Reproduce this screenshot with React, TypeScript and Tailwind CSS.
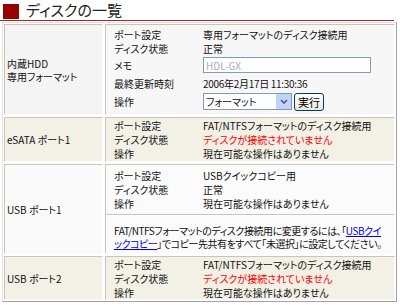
import React from "react";

const font = {
  fontFamily: '"Noto Sans CJK JP", "Noto Sans", sans-serif',
};

function Label({ children }: { children: React.ReactNode }) {
  return <div className="w-[97px] shrink-0 pl-[8px]">{children}</div>;
}

function InfoRows({
  rows,
}: {
  rows: { label: string; value: React.ReactNode; red?: boolean }[];
}) {
  return (
    <div className="flex flex-col">
      {rows.map((r) => (
        <div key={r.label} className="flex h-[14px] items-center">
          <Label>{r.label}</Label>
          <div className={r.red ? "text-[#ff0000]" : "text-[#111]"}>
            {r.value}
          </div>
        </div>
      ))}
    </div>
  );
}

function Row({
  title,
  bg,
  leftBg,
  children,
  h,
}: {
  title: React.ReactNode;
  bg: string;
  leftBg: string;
  children: React.ReactNode;
  h: string;
}) {
  return (
    <div className={`flex gap-[2px] ${h}`}>
      <div
        className={`flex w-[99px] shrink-0 items-center border border-t-[#c9c5b9] border-l-[#c9c5b9] border-b-[#fdfdfb] border-r-[#fdfdfb] pl-[2px] ${leftBg}`}
      >
        <div className="leading-[13px]">{title}</div>
      </div>
      <div
        className={`flex flex-1 flex-col border border-t-[#c9c5b9] border-l-[#c9c5b9] border-b-[#fdfdfb] border-r-[#fdfdfb] ${bg}`}
      >
        {children}
      </div>
    </div>
  );
}

export default function App() {
  return (
    <div
      className="h-[305px] w-[400px] overflow-hidden bg-white text-[10px] text-[#111]"
      style={{ ...font, fontFeatureSettings: '"palt"' }}
    >
      {/* 見出し */}
      <div className="flex h-[22px] items-start">
        <div className="flex w-[394px] items-center border-b border-[#b22222] pb-[1px]">
          <div className="ml-[3px] mt-[3px] h-[15px] w-[16px] bg-[#990000]" />
          <div className="ml-[7px] mt-[1px] text-[15px] leading-[18px] text-[#222]">
            ディスクの一覧
          </div>
        </div>
      </div>

      {/* 一覧 */}
      <div className="ml-[2px] flex w-[395px] flex-col gap-[2px] border border-t-[#e6e3da] border-l-[#e6e3da] border-b-[#a4a4a4] border-r-[#a4a4a4] p-[1px]">
        {/* 内蔵HDD */}
        <Row
          h="h-[91px]"
          leftBg="bg-[#f4f4f4]"
          bg="bg-[#f7f7f7]"
          title={
            <>
              <div>内蔵HDD</div>
              <div>専用フォーマット</div>
            </>
          }
        >
          <div className="flex flex-col pt-[2px]">
            <div className="flex h-[14px] items-center">
              <Label>ポート設定</Label>
              <div>専用フォーマットのディスク接続用</div>
            </div>
            <div className="flex h-[14px] items-center">
              <Label>ディスク状態</Label>
              <div>正常</div>
            </div>
            <div className="flex h-[20px] items-center">
              <Label>メモ</Label>
              <input
                readOnly
                value="HDL-GX"
                className="h-[16px] w-[168px] border border-[#7f9db9] bg-white px-[2px] text-[10px] text-[#aaa] outline-none"
              />
            </div>
            <div className="flex h-[17px] items-center">
              <Label>最終更新時刻</Label>
              <div className="tracking-[-0.3px]">2006年2月17日 11:30:36</div>
            </div>
            <div className="flex h-[19px] items-center">
              <Label>操作</Label>
              <div className="flex items-center gap-[2px]">
                <div className="flex h-[17px] w-[89px] items-center justify-between border border-[#7f9db9] bg-white pl-[2px]">
                  <span>フォーマット</span>
                  <span className="flex h-[15px] w-[15px] items-center justify-center bg-[#c1d3fb]">
                    <svg width="8" height="6" viewBox="0 0 8 6">
                      <path
                        d="M1 1 L4 4 L7 1"
                        fill="none"
                        stroke="#4d6185"
                        strokeWidth="1.6"
                      />
                    </svg>
                  </span>
                </div>
                <button className="h-[18px] w-[30px] rounded-[3px] border border-[#003c74] bg-gradient-to-b from-white to-[#ece9d8] text-[11px] leading-[14px] text-black">
                  実行
                </button>
              </div>
            </div>
          </div>
        </Row>

        {/* eSATA */}
        <Row
          h="h-[45px]"
          leftBg="bg-[#f3f0e6]"
          bg="bg-[#f3f0e6] justify-center"
          title="eSATA ポート1"
        >
          <InfoRows
            rows={[
              { label: "ポート設定", value: "FAT/NTFSフォーマットのディスク接続用" },
              {
                label: "ディスク状態",
                value: "ディスクが接続されていません",
                red: true,
              },
              { label: "操作", value: "現在可能な操作はありません" },
            ]}
          />
        </Row>

        {/* USB ポート1 */}
        <Row
          h="h-[90px]"
          leftBg="bg-[#fafafa]"
          bg="bg-[#fbfbfb]"
          title="USB ポート1"
        >
          <div className="flex h-[50px] items-center border-b border-[#c9c5b9]">
            <InfoRows
              rows={[
                { label: "ポート設定", value: "USBクイックコピー用" },
                { label: "ディスク状態", value: "正常" },
                { label: "操作", value: "現在可能な操作はありません" },
              ]}
            />
          </div>
          <div className="flex flex-1 items-center border-t border-white pl-[8px] pr-[9px] pt-[4px] leading-[13px] tracking-[-0.45px]">
            <p>
              FAT/NTFSフォーマットのディスク接続用に変更するには、「
              <a href="#" className="text-[#0000ee] underline">
                USBクイックコピー
              </a>
              」でコピー先共有をすべて「未選択」に設定してください。
            </p>
          </div>
        </Row>

        {/* USB ポート2 */}
        <Row
          h="h-[44px]"
          leftBg="bg-[#f3f0e6]"
          bg="bg-[#f3f0e6] justify-center"
          title="USB ポート2"
        >
          <InfoRows
            rows={[
              { label: "ポート設定", value: "FAT/NTFSフォーマットのディスク接続用" },
              {
                label: "ディスク状態",
                value: "ディスクが接続されていません",
                red: true,
              },
              { label: "操作", value: "現在可能な操作はありません" },
            ]}
          />
        </Row>
      </div>
    </div>
  );
}
